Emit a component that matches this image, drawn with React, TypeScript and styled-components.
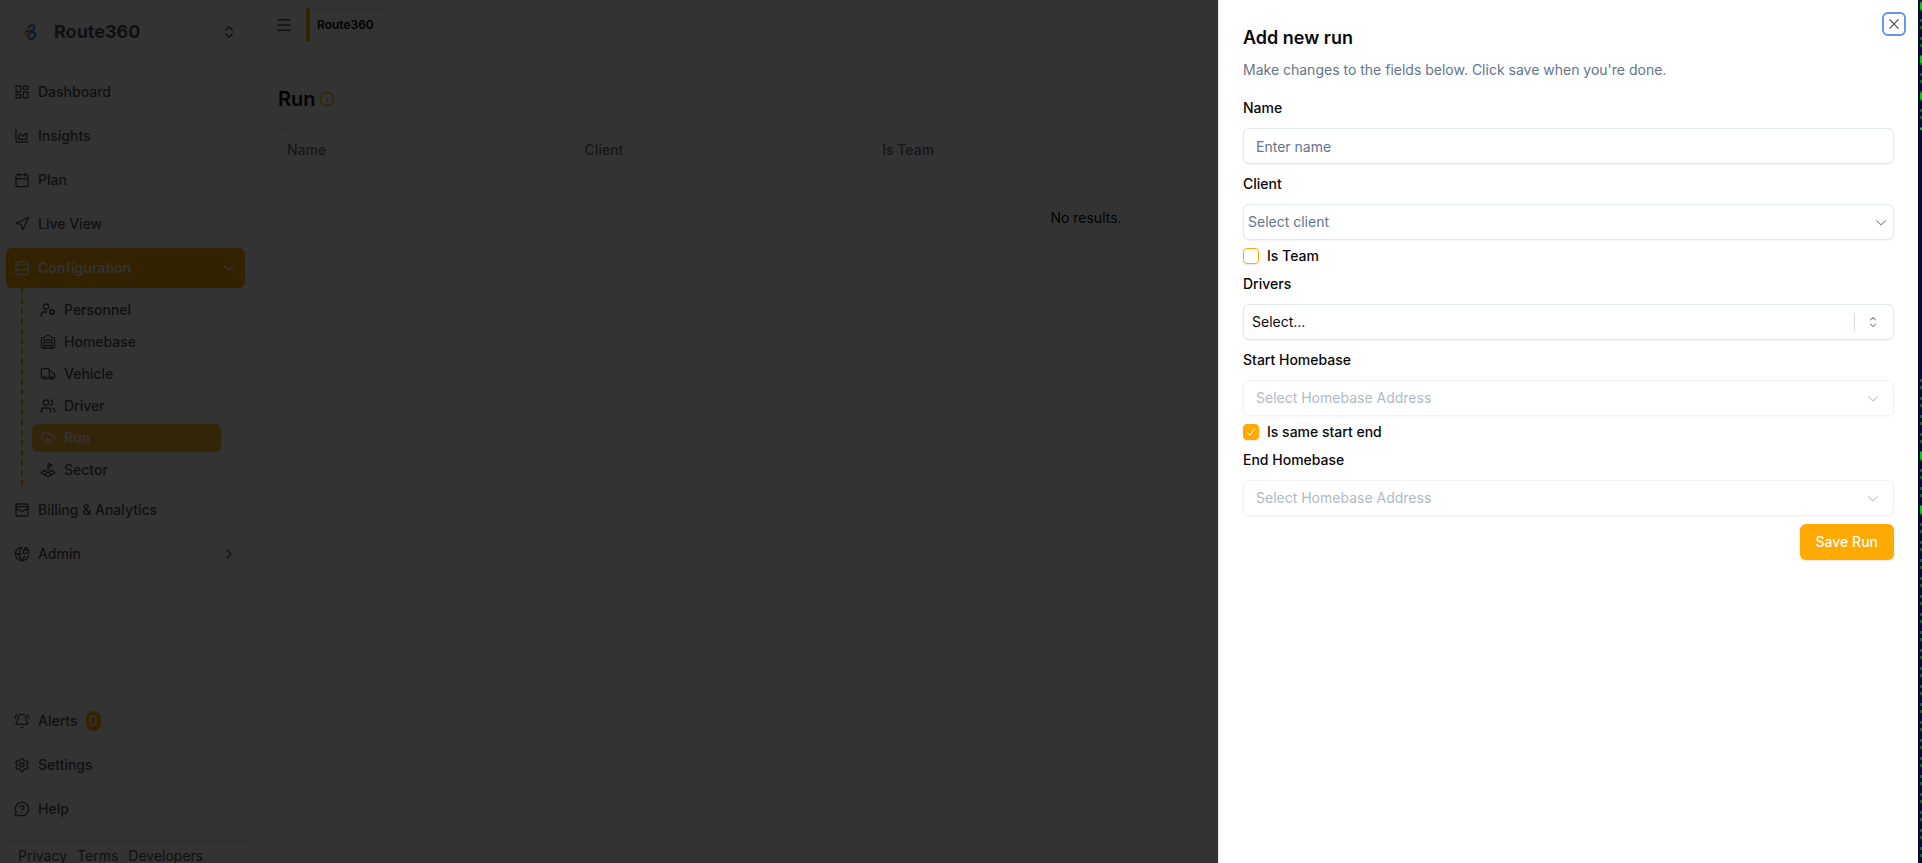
import React from "react";
import styled, { createGlobalStyle, css } from "styled-components";
import {
  LayoutDashboard, ChartArea, Calendar, Navigation, Database, UserCog, Warehouse, Truck, Users, CloudCog,
  LandPlot, WalletCards, GlobeLock, BellRing, Settings, MessageCircleQuestionMark, ChevronDown, ChevronRight,
  ChevronsUpDown, Menu, Info,
} from "lucide-react";

const Global = createGlobalStyle`
  *, *::before, *::after { box-sizing: border-box; }
  html, body { margin: 0; height: 100%; }
  #root { height: 100%; }
  body {
    font-family: Inter, "Liberation Sans", sans-serif;
    font-size: 14px; line-height: 20px; color: #09090b;
    background: #070b38; overflow: hidden;
  }
  button, input, select { font: inherit; color: inherit; }
  a { color: inherit; text-decoration: none; }
  svg { flex: none; display: block; }
`;

const Screen = styled.div`
  display: grid;
  grid-template-columns: minmax(0, 1fr) 2px;
  column-gap: 2px;
  height: 100%;
`;

const Page = styled.div`
  position: relative;
  display: flex;
  min-width: 0;
  height: 100%;
  overflow: hidden;
  background: #fff;
`;

/* Sliver of a terminal window showing past the right side of the page. */
const Edge = styled.div`
  background:
    linear-gradient(#00d010, #00d010) 0 3px / 2px 6px no-repeat,
    linear-gradient(#00d010, #00d010) 0 56px / 2px 7px no-repeat,
    linear-gradient(#00d010, #00d010) 0 93px / 2px 6px no-repeat,
    linear-gradient(#00d010, #00d010) 0 128px / 2px 2px no-repeat,
    linear-gradient(#00d010, #00d010) 0 452px / 2px 7px no-repeat,
    linear-gradient(#00d010, #00d010) 0 506px / 2px 7px no-repeat,
    linear-gradient(#070b38, #070b38) 0 130px / 2px 246px no-repeat,
    repeating-linear-gradient(#070b38 0 1px, #0a6a1c 1px 4px, #070b38 4px 8px, #0a6a1c 8px 11px, #070b38 11px 18px);
`;

const Sidebar = styled.aside`
  display: flex;
  flex-direction: column;
  width: 254px;
  flex: none;
  border-right: 1px solid #e2e8f0;
  color: #52525b;
`;

const Brand = styled.button`
  display: flex;
  align-items: center;
  gap: 8px;
  height: 64px;
  padding: 0 16px 0 14px;
  border: 0;
  background: none;
  font-size: 18px;
  font-weight: 700;
  text-align: left;
`;

const BrandMark = styled.svg`
  width: 32px;
  height: 32px;
`;

const Grow = styled.span`
  flex: 1;
`;

const NavList = styled.nav`
  display: flex;
  flex-direction: column;
  gap: 4px;
  padding: 8px 8px 0 6px;
`;

const NavItem = styled.a<{ $active?: boolean }>`
  display: flex;
  align-items: center;
  gap: 8px;
  height: 40px;
  padding: 0 8px;
  border-radius: 6px;
  font-weight: 500;
  ${(p) => p.$active && css`background: #ffaa00; color: #fafafa; font-weight: 600;`}
`;

const SubList = styled.div`
  display: flex;
  flex-direction: column;
  gap: 4px;
  margin: -4px 0 0 15px;
  padding: 8px 24px 2px 9px;
  border-left: 2px dashed #ffaa00;
`;

const SubItem = styled(NavItem)`
  height: 28px;
  ${(p) => p.$active && css`background: #ffbb33;`}
`;

const Badge = styled.span`
  padding: 0 3px;
  border-radius: 8px;
  background: #ffaa00;
  color: #fff;
`;

const Footer = styled.footer`
  display: flex;
  gap: 10px;
  height: 22px;
  margin: 12px 5px 0 2px;
  padding: 4px 16px 0;
  border-top: 1px solid #d4d4d8;
`;

const Main = styled.main`
  flex: 1;
  min-width: 0;
`;

const TopBar = styled.header`
  display: flex;
  align-items: center;
  gap: 13px;
  height: 51px;
  padding: 0 21px;
  border-bottom: 1px solid #e2e8f0;
  color: #52525b;
`;

const IconButton = styled.button`
  display: flex;
  padding: 0;
  border: 0;
  background: none;
`;

const Tab = styled.a`
  height: 34px;
  padding: 0 11px 0 7px;
  border: 1px solid #e2e8f0;
  border-left: 4px solid #ffaa00;
  border-radius: 2px 6px 6px 2px;
  color: #000;
  font-size: 12px;
  line-height: 32px;
  font-weight: 600;
`;

const Content = styled.section`
  padding: 32px 24px;
`;

const Heading = styled.h1`
  display: flex;
  align-items: center;
  gap: 3px;
  margin: 0 0 14px;
  font-size: 20px;
  line-height: 32px;
  font-weight: 600;
  svg { color: #ffaa00; }
`;

const TableFrame = styled.div`
  border: 1px solid #e2e8f0;
  border-radius: 6px;
`;

const Table = styled.table`
  width: 100%;
  table-layout: fixed;
  border-collapse: collapse;
  th {
    height: 40px;
    padding: 0 8px;
    border-bottom: 1px solid #e2e8f0;
    color: #64748b;
    font-weight: 500;
    text-align: left;
  }
  th:last-child { width: 126px; }
  td { height: 96px; padding: 0; text-align: center; }
`;

const Overlay = styled.div`
  position: absolute;
  inset: 0;
  background: rgba(0, 0, 0, 0.8);
`;

const Drawer = styled.div`
  position: absolute;
  top: 0;
  right: 0;
  bottom: 0;
  width: 700px;
  max-width: 100%;
  padding: 24px;
  border-left: 1px solid #e2e8f0;
  background: #fff;
`;

const CloseButton = styled(IconButton)`
  position: absolute;
  top: 12px;
  right: 12px;
  padding: 2px;
  border: 2px solid #6495f0;
  border-radius: 6px;
  color: #3f3f46;
`;

const DrawerTitle = styled.h2`
  margin: 0;
  font-size: 18px;
  line-height: 28px;
  font-weight: 600;
`;

const DrawerText = styled.p`
  margin: 8px 0 16px;
  color: #64748b;
`;

const Form = styled.form`
  display: flex;
  flex-direction: column;
  gap: 8px;
`;

const Field = styled.div`
  display: flex;
  flex-direction: column;
  gap: 8px;
`;

const Label = styled.label`
  line-height: 24px;
  font-weight: 500;
`;

const control = css`
  width: 100%;
  height: 36px;
  border: 1px solid #e2e8f0;
  border-radius: 6px;
  background: #fff;
  box-shadow: 0 1px 2px rgba(0, 0, 0, 0.05);
  outline: none;
`;

const TextInput = styled.input`
  ${control}
  padding: 0 12px;
  &::placeholder { color: #64748b; opacity: 1; }
`;

const SelectBox = styled.div<{ $dim?: boolean; $end: number }>`
  display: grid;
  align-items: center;
  opacity: ${(p) => (p.$dim ? 0.5 : 1)};
  > * { grid-area: 1 / 1; }
  > span {
    display: flex;
    align-items: center;
    gap: 10px;
    justify-self: end;
    margin-right: ${(p) => p.$end}px;
    color: #8b8b92;
    pointer-events: none;
  }
`;

const Select = styled.select<{ $inset: number; $dark?: boolean }>`
  ${control}
  appearance: none;
  padding: 0 40px 0 ${(p) => p.$inset}px;
  color: ${(p) => (p.$dark ? "#09090b" : "#64748b")};
  &:disabled { opacity: 1; }
`;

const Divider = styled.i`
  width: 1px;
  height: 18px;
  background: #d4dae2;
`;

const CheckRow = styled.label`
  display: flex;
  align-items: center;
  gap: 8px;
  height: 16px;
  font-weight: 500;
`;

const CheckBox = styled.span`
  display: grid;
  width: 16px;
  height: 16px;
  > * { grid-area: 1 / 1; }
  input {
    appearance: none;
    width: 16px;
    height: 16px;
    margin: 0;
    border: 1px solid #ffaa00;
    border-radius: 4px;
    box-shadow: 0 1px 2px rgba(0, 0, 0, 0.1);
  }
  input:checked { background: #ffaa00; }
  svg { place-self: center; color: #fff; pointer-events: none; }
`;

const SaveButton = styled.button`
  align-self: flex-end;
  height: 36px;
  padding: 0 16px;
  border: 0;
  border-radius: 6px;
  background: #ffaa00;
  color: #fafafa;
  font-weight: 500;
  box-shadow: 0 1px 2px rgba(0, 0, 0, 0.1);
`;

const thinPaths = {
  chevron: "M3.5 6.5l4 3.75 4-3.75",
  sort: "M5.2 5.6L7.5 3.2l2.3 2.4M5.2 9.4l2.3 2.4 2.3-2.4",
  cross: "M3.5 3.5l8 8M11.5 3.5l-8 8",
  check: "M3.9 8.2l2.6 2.8 4.7-7",
};

function ThinIcon({ name, size = 16 }: { name: keyof typeof thinPaths; size?: number }) {
  return (
    <svg width={size} height={size} viewBox="0 0 15 15" fill="none" stroke="currentColor" strokeLinecap="round" strokeLinejoin="round" aria-hidden="true">
      <path d={thinPaths[name]} />
    </svg>
  );
}

const topNav = [
  { label: "Dashboard", Icon: LayoutDashboard },
  { label: "Insights", Icon: ChartArea },
  { label: "Plan", Icon: Calendar },
  { label: "Live View", Icon: Navigation },
];

const configNav = [
  { label: "Personnel", Icon: UserCog },
  { label: "Homebase", Icon: Warehouse },
  { label: "Vehicle", Icon: Truck },
  { label: "Driver", Icon: Users },
  { label: "Run", Icon: CloudCog, active: true },
  { label: "Sector", Icon: LandPlot },
];

function HomebaseField({ id, label }: { id: string; label: string }) {
  return (
    <Field>
      <Label htmlFor={id}>{label}</Label>
      <SelectBox $dim $end={13}>
        <Select id={id} $inset={12} disabled>
          <option>Select Homebase Address</option>
        </Select>
        <span><ThinIcon name="chevron" /></span>
      </SelectBox>
    </Field>
  );
}

export default function App() {
  return (
    <Screen>
      <Global />
      <Page>
        <Sidebar>
          <Brand type="button">
            <BrandMark viewBox="0 0 32 32" fill="none" strokeWidth="2.2" strokeLinecap="round">
              <path d="M16 15.500c-3-2-5.500.5-4 2.500 1 1 2.500.5 3.500 0-2 1.500-2 4.500.5 5" stroke="#f08040" />
              <path d="M14.500 11.500c1-3 6-3 6 0 0 2-3.500 3-4.500 5 3-2 6 0 5 3.500-.8 2-3 3-5 3" stroke="#4a7dd0" />
            </BrandMark>
            Route360
            <Grow />
            <ChevronsUpDown size={16} />
          </Brand>
          <NavList>
            {topNav.map(({ label, Icon }) => (
              <NavItem href="#" key={label}><Icon size={16} />{label}</NavItem>
            ))}
            <NavItem href="#" $active>
              <Database size={16} />Configuration<Grow /><ChevronDown size={16} />
            </NavItem>
            <SubList>
              {configNav.map(({ label, Icon, active }) => (
                <SubItem href="#" key={label} $active={active}><Icon size={16} />{label}</SubItem>
              ))}
            </SubList>
            <NavItem href="#"><WalletCards size={16} />Billing &amp; Analytics</NavItem>
            <NavItem href="#"><GlobeLock size={16} />Admin<Grow /><ChevronRight size={16} /></NavItem>
          </NavList>
          <Grow />
          <NavList>
            <NavItem href="#"><BellRing size={16} />Alerts<Badge>0</Badge></NavItem>
            <NavItem href="#"><Settings size={16} />Settings</NavItem>
            <NavItem href="#"><MessageCircleQuestionMark size={16} />Help</NavItem>
          </NavList>
          <Footer>
            <a href="#">Privacy</a>
            <a href="#">Terms</a>
            <a href="#">Developers</a>
          </Footer>
        </Sidebar>
        <Main>
          <TopBar>
            <IconButton type="button" aria-label="Toggle menu"><Menu size={18} /></IconButton>
            <Tab href="#">Route360</Tab>
          </TopBar>
          <Content>
            <Heading>Run <Info size={16} /></Heading>
            <TableFrame>
              <Table>
                <thead>
                  <tr><th>Name</th><th>Client</th><th>Is Team</th><th /><th /><th /></tr>
                </thead>
                <tbody>
                  <tr><td colSpan={6}>No results.</td></tr>
                </tbody>
              </Table>
            </TableFrame>
          </Content>
        </Main>
        <Overlay />
        <Drawer role="dialog" aria-labelledby="drawer-title">
          <CloseButton type="button" aria-label="Close"><ThinIcon name="cross" /></CloseButton>
          <DrawerTitle id="drawer-title">Add new run</DrawerTitle>
          <DrawerText>Make changes to the fields below. Click save when you're done.</DrawerText>
          <Form>
            <Field>
              <Label htmlFor="name">Name</Label>
              <TextInput id="name" placeholder="Enter name" />
            </Field>
            <Field>
              <Label htmlFor="client">Client</Label>
              <SelectBox $end={5}>
                <Select id="client" $inset={4}><option>Select client</option></Select>
                <span><ThinIcon name="chevron" /></span>
              </SelectBox>
            </Field>
            <CheckRow>
              <CheckBox><input type="checkbox" /></CheckBox>
              Is Team
            </CheckRow>
            <Field>
              <Label htmlFor="drivers">Drivers</Label>
              <SelectBox $end={13}>
                <Select id="drivers" $inset={8} $dark><option>Select...</option></Select>
                <span><Divider /><ThinIcon name="sort" /></span>
              </SelectBox>
            </Field>
            <HomebaseField id="start" label="Start Homebase" />
            <CheckRow>
              <CheckBox>
                <input type="checkbox" defaultChecked />
                <ThinIcon name="check" size={14} />
              </CheckBox>
              Is same start end
            </CheckRow>
            <HomebaseField id="end" label="End Homebase" />
            <SaveButton type="button">Save Run</SaveButton>
          </Form>
        </Drawer>
      </Page>
      <Edge />
    </Screen>
  );
}
